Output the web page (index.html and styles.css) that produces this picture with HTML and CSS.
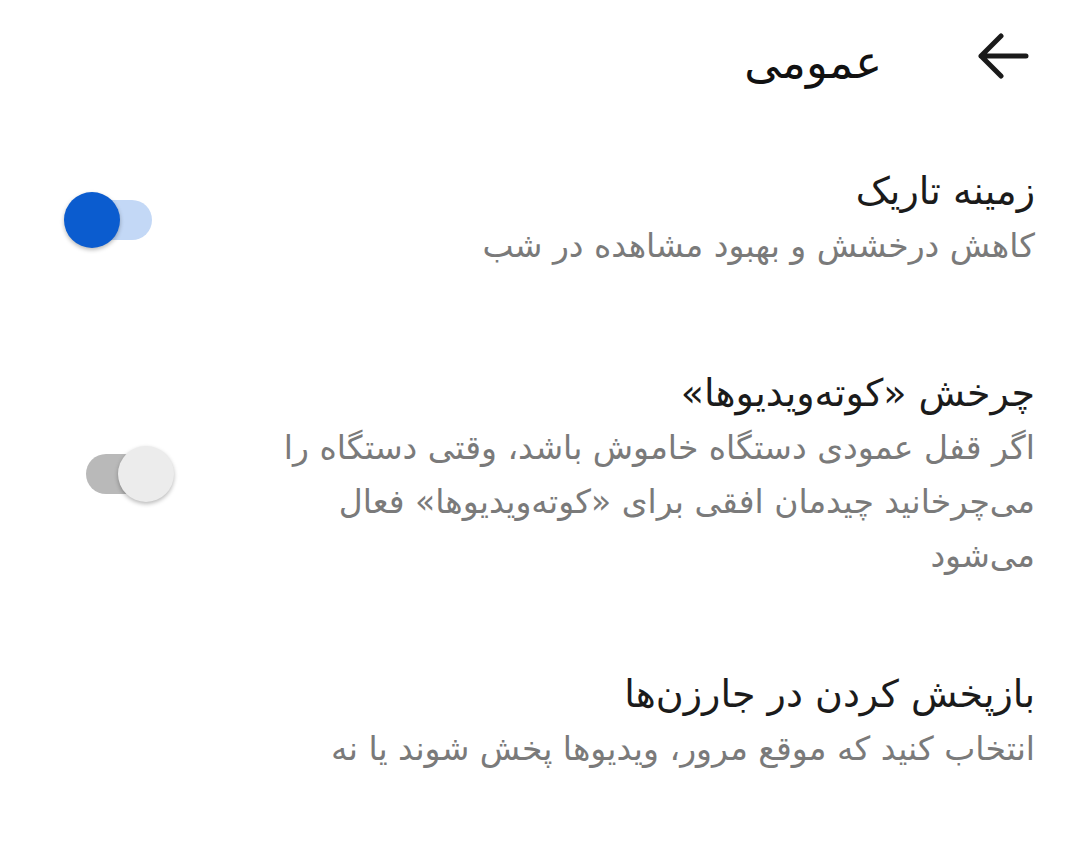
FILE: index.html
```html
<!DOCTYPE html>
<html lang="fa" dir="rtl">
<head>
<meta charset="utf-8">
<link rel="stylesheet" href="styles.css">
</head>
<body>
<header class="appbar">
  <svg class="back" width="54" height="46" viewBox="0 0 54 46" aria-hidden="true">
    <path d="M51 23H6M6 23L26 3M6 23L26 43" fill="none" stroke="#1a1a1a" stroke-width="5" stroke-linecap="round" stroke-linejoin="round"/>
  </svg>
  <h1 class="title">عمومی</h1>
</header>
<main class="list">
  <section class="item item-first">
    <div class="text">
      <div class="item-title">زمینه تاریک</div>
      <div class="item-sub">کاهش درخشش و بهبود مشاهده در شب</div>
    </div>
    <div class="switch switch-on switch-a">
      <span class="track"></span>
      <span class="thumb"></span>
    </div>
  </section>
  <section class="item item-second">
    <div class="text">
      <div class="item-title">چرخش «کوته‌ویدیوها»</div>
      <div class="item-sub">اگر قفل عمودی دستگاه خاموش باشد، وقتی دستگاه را می‌چرخانید چیدمان افقی برای «کوته‌ویدیوها» فعال می‌شود</div>
    </div>
    <div class="switch switch-off switch-b">
      <span class="track"></span>
      <span class="thumb"></span>
    </div>
  </section>
  <section class="item item-third">
    <div class="text">
      <div class="item-title">بازپخش کردن در جارزن‌ها</div>
      <div class="item-sub">انتخاب کنید که موقع مرور، ویدیوها پخش شوند یا نه</div>
    </div>
  </section>
</main>
</body>
</html>
```
FILE: styles.css
```css
html, body {
  margin: 0;
  padding: 0;
  background: #ffffff;
}
body {
  width: 1080px;
  height: 844px;
  overflow: hidden;
  direction: rtl;
  font-family: "DejaVu Sans", "Noto Sans", sans-serif;
  color: #1f1f1f;
}
.appbar {
  height: 120px;
  display: flex;
  align-items: center;
  padding-right: 51px;
  gap: 93px;
  box-sizing: border-box;
  padding-bottom: 8px;
}
.back {
  display: block;
  flex: none;
}
.title {
  margin: 0;
  font-size: 45px;
  font-weight: normal;
  line-height: 1;
  color: #111111;
  padding-top: 12px;
}
.list {
  display: flex;
  flex-direction: column;
}
.item {
  display: flex;
  align-items: center;
  padding-right: 45px;
  box-sizing: border-box;
}
.text {
  width: 762px;
  flex: none;
}
.item-title {
  font-size: 38px;
  line-height: 56px;
  color: #1b1b1b;
}
.item-sub {
  font-size: 33px;
  line-height: 54px;
  color: #7a7a7a;
}
.item-first {
  padding-top: 43px;
}
.item-second {
  padding-top: 92px;
}
.item-third {
  padding-top: 83px;
}
.switch {
  position: relative;
  width: 88px;
  height: 56px;
  flex: none;
}
.switch-a {
  margin-right: 121px;
  margin-top: 4px;
}
.switch-b {
  margin-right: 99px;
}
.track {
  position: absolute;
  top: 8px;
  width: 70px;
  height: 40px;
  border-radius: 20px;
}
.thumb {
  position: absolute;
  top: 0;
  width: 56px;
  height: 56px;
  border-radius: 50%;
  box-shadow: 0 2px 4px rgba(0, 0, 0, 0.28);
}
.switch-on .track {
  right: 0;
  background: #c3d8f6;
}
.switch-on .thumb {
  left: 0;
  background: #0b5ccf;
}
.switch-off .track {
  left: 0;
  background: #b9b9b9;
}
.switch-off .thumb {
  right: 0;
  background: #ececec;
}
```
